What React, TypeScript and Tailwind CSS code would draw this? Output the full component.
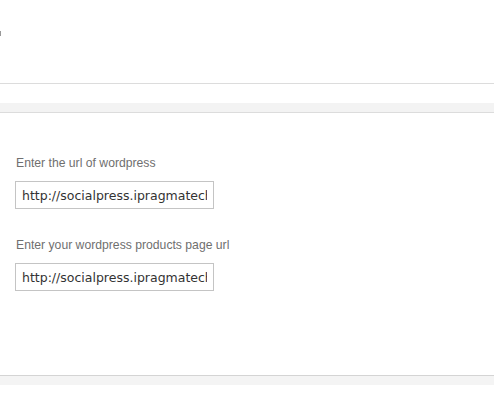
import React from "react";

const inputFont = { fontFamily: '"DejaVu Sans", Verdana, sans-serif' };

export default function App() {
  return (
    <div className="w-[494px] h-[400px] bg-white" style={{ fontFamily: '"Liberation Sans", Arial, sans-serif' }}>
      <div className="relative h-[84px] border-b border-[#dcdcdc]">
        <div className="absolute left-0 top-[31px] w-[1px] h-[5px] bg-[#999]" />
      </div>
      <div className="h-[19px]" />
      <div className="h-[10px] bg-[#f3f3f3] border-b border-[#dcdcdc]" />
      <div className="h-[262px] px-[15px] pt-[43px]">
        <div className="text-[12.2px] leading-[14px] text-[#6f6f6f] pl-[1px]">Enter the url of wordpress</div>
        <input
          readOnly
          value="http://socialpress.ipragmatech.com"
          className="mt-[11px] block w-[199px] h-[28px] border border-[#c4c4c4] pl-[6px] pr-[6px] text-[12.5px] text-[#333] outline-none"
          style={inputFont}
        />
        <div className="mt-[29px] text-[12.2px] leading-[14px] text-[#6f6f6f] pl-[1px]">Enter your wordpress products page url</div>
        <input
          readOnly
          value="http://socialpress.ipragmatech.com"
          className="mt-[11px] block w-[199px] h-[28px] border border-[#c4c4c4] pl-[6px] pr-[6px] text-[12.5px] text-[#333] outline-none"
          style={inputFont}
        />
      </div>
      <div className="h-[10px] bg-[#f4f4f4] border-t border-[#d4d4d4]" />
    </div>
  );
}
